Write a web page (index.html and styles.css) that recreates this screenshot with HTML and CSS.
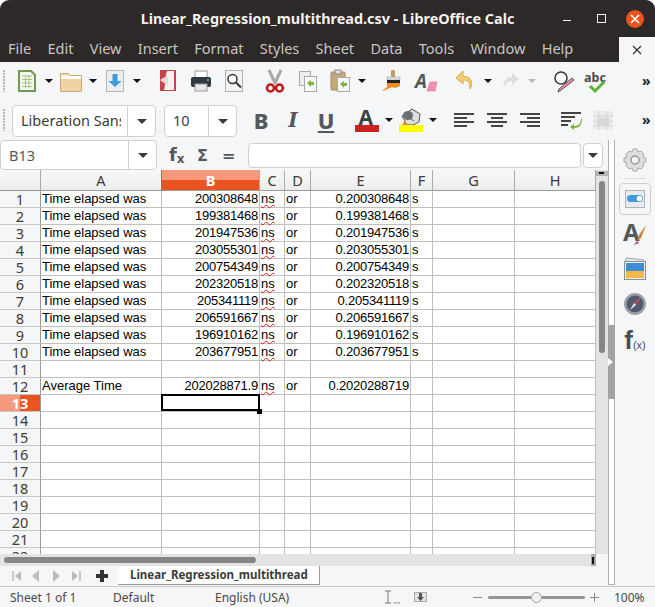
FILE: index.html
```html
<!DOCTYPE html>
<html>

<head>
    <meta charset="utf-8">
    <title>Linear_Regression_multithread.csv - LibreOffice Calc</title>
    <link rel="stylesheet" href="styles.css">
</head>

<body>
    <div class="window">
        <div class="titlebar">
            <span class="title">Linear_Regression_multithread.csv - LibreOffice Calc</span>
            <div class="winbtns">
                <span class="win-min"></span>
                <span class="win-max"></span>
                <span class="win-close">
                    <svg width="12" height="12" viewBox="0 0 12 12"><path d="M2 2l8 8M10 2l-8 8" stroke="#fff" stroke-width="1.6"/></svg>
                </span>
            </div>
        </div>

        <div class="menubar">
            <nav class="menus">
                <span>File</span><span>Edit</span><span>View</span><span>Insert</span><span>Format</span><span>Styles</span><span>Sheet</span><span>Data</span><span>Tools</span><span>Window</span><span>Help</span>
            </nav>
            <div class="doc-close">
                <svg width="10" height="10" viewBox="0 0 10 10"><path d="M1 1l8 8M9 1l-8 8" stroke="#333" stroke-width="1.2"/></svg>
            </div>
        </div>

        <!-- standard toolbar -->
        <div class="toolbar tb-std">
            <span class="grip"></span>
            <svg class="tool ml10" viewBox="0 0 24 24"><path d="M4 2h12l4 4v16H4z" fill="#f4f8ef" stroke="#6f9a4f" stroke-width="2"/><path d="M7 7h10M7 10.500h10M7 14h10M7 17.500h10M10.500 6v13M14 6v13" stroke="#a3c389"/></svg>
            <span class="arrow ml6"></span>
            <svg class="tool ml6" viewBox="0 0 24 24"><path d="M1.500 4.500h8l2 2h11v16h-21z" fill="#f3ddb6" stroke="#c7a878"/><path d="M2 7h20v3H2z" fill="#fff"/><path d="M2 10h20v12H2z" fill="#f0d3a2"/></svg>
            <span class="arrow ml6"></span>
            <svg class="tool ml6" viewBox="0 0 24 24"><rect x="3.500" y="1.500" width="17" height="21" fill="#eceef0" stroke="#b4b7ba"/><path d="M9.500 5h5v7h4l-6.500 6-6.500-6h4z" fill="#3d9bdc"/></svg>
            <span class="arrow ml6"></span>
            <svg class="tool ml15" viewBox="0 0 24 24"><rect x="4" y="1" width="16" height="21" fill="#c4444c"/><path d="M8 21c2-7 1-14 3-19h7v19z" fill="#f6f2f0"/><path d="M4 11l8-5v11z" fill="#f0d8d8"/></svg>
            <svg class="tool ml9" viewBox="0 0 24 24"><rect x="6" y="2" width="12" height="7" fill="#fff" stroke="#999"/><rect x="2" y="8" width="20" height="10" rx="2" fill="#33373a"/><rect x="6" y="15" width="12" height="7" fill="#e8e8e8" stroke="#999"/><rect x="18" y="10" width="2" height="2" fill="#2fa6e8"/></svg>
            <svg class="tool ml9" viewBox="0 0 24 24"><rect x="3.500" y="1.500" width="17" height="21" fill="#f2f3f4" stroke="#b0b2b4"/><circle cx="10.500" cy="10" r="4.500" fill="#fff" stroke="#333" stroke-width="1.500"/><path d="M14 13.500l5 5" stroke="#333" stroke-width="2"/></svg>
            <svg class="tool ml17" viewBox="0 0 24 24"><path d="M6 1l6.500 14M18 1l-6.500 14" stroke="#a8a8a8" stroke-width="3"/><circle cx="7.500" cy="19" r="3.500" fill="none" stroke="#c4161c" stroke-width="2.500"/><circle cx="16.500" cy="19" r="3.500" fill="none" stroke="#c4161c" stroke-width="2.500"/></svg>
            <svg class="tool ml9" viewBox="0 0 24 24"><rect x="3.500" y="2.500" width="11" height="14" fill="#eee" stroke="#aaa"/><rect x="8.500" y="7.500" width="12" height="15" fill="#f8f8f8" stroke="#aaa"/><path d="M11 14l4-3v2h3v3h-3v2z" fill="#7cb342"/></svg>
            <svg class="tool ml8" viewBox="0 0 24 24"><rect x="3" y="3" width="14" height="18" rx="1" fill="#c9a877" stroke="#a88a5c"/><rect x="7" y="1" width="6" height="4" fill="#ddd" stroke="#888"/><rect x="9.500" y="8.500" width="12" height="14" fill="#f6f6f6" stroke="#aaa"/><path d="M12 15l4-3v2h3v3h-3v2z" fill="#7cb342"/></svg>
            <span class="arrow ml6"></span>
            <svg class="tool ml15" viewBox="0 0 24 24"><rect x="10" y="1" width="4" height="7" rx="1" fill="#c89a5c"/><rect x="6" y="8" width="13" height="3" fill="#ddd" stroke="#999" stroke-width=".5"/><path d="M6 11h13v6H6z" fill="#222"/><path d="M6 14h13v3l-5 2-3-1-9 4H1l5-4z" fill="#f08a1c"/></svg>
            <svg class="tool ml9" viewBox="0 0 24 24"><text x="1" y="19" class="ico-a ital">A</text><path d="M13 22l3-9h7l-2 9z" fill="#f490b4" stroke="#e070a0" stroke-width=".6"/></svg>
            <svg class="tool ml15" viewBox="0 0 24 24"><path d="M10 2L3 9l7 6v-4c5 0 7 2 7 9 3-5 3-12-7-13z" fill="#f6cd74" stroke="#e2ac48"/></svg>
            <span class="arrow ml7"></span>
            <svg class="tool ml6" viewBox="0 0 24 24"><path d="M14 4l7 6-7 6v-4c-5 0-7 2-8 7-1-7 2-11 8-11z" fill="#dcdedf"/></svg>
            <span class="arrow off ml6"></span>
            <svg class="tool ml16" viewBox="0 0 24 24"><circle cx="9" cy="9" r="6" fill="#fff" stroke="#333" stroke-width="1.500"/><path d="M22 11L8 22l-2 1 1-3 13-11z" fill="#f08cb0" stroke="#333" stroke-width=".8"/></svg>
            <svg class="tool ml8" viewBox="0 0 24 24"><text x="0" y="13" class="ico-abc">abc</text><path d="M6 17l5 5 9-9" fill="none" stroke="#5ab52c" stroke-width="3"/></svg>
            <span class="more ml-more1">»</span>
        </div>

        <!-- formatting toolbar -->
        <div class="toolbar tb-fmt">
            <span class="grip"></span>
            <div class="combo combo-font ml7"><span class="combo-val">Liberation Sans</span><span class="combo-btn"><i class="arrow big"></i></span></div>
            <div class="combo combo-size ml8"><span class="combo-val">10</span><span class="combo-btn"><i class="arrow big"></i></span></div>
            <span class="fmt-letter fmt-b ml12">B</span>
            <span class="fmt-letter fmt-i ml8">I</span>
            <span class="fmt-letter fmt-u ml9">U</span>
            <svg class="tool ml17" viewBox="0 0 24 24"><text x="3.500" y="16.500" class="ico-fcol">A</text><rect y="17" width="24" height="7" fill="#c9211e"/></svg>
            <span class="arrow ml6"></span>
            <svg class="tool ml6" viewBox="0 0 24 24"><path d="M3 8l10-7 8 5-1 8-6 3H8z" fill="#dcdedf" stroke="#55585a"/><ellipse cx="9" cy="7.500" rx="5" ry="4.500" fill="#6b6e70"/><path d="M11 10l4 3" stroke="#55585a"/><path d="M6 12l2 5H3z" fill="#f08a1c"/><rect y="17" width="24" height="7" fill="#ffff00"/></svg>
            <span class="arrow ml6"></span>
            <svg class="tool ml15" viewBox="0 0 24 24"><path d="M2 6h20M2 10h13M2 14h20M2 18h13" stroke="#444" stroke-width="2"/></svg>
            <svg class="tool ml9" viewBox="0 0 24 24"><path d="M2 6h20M6 10h12M2 14h20M6 18h12" stroke="#444" stroke-width="2"/></svg>
            <svg class="tool ml9" viewBox="0 0 24 24"><path d="M2 6h20M9 10h13M2 14h20M9 18h13" stroke="#444" stroke-width="2"/></svg>
            <svg class="tool ml17" viewBox="0 0 24 24"><path d="M2 5h20M2 9h14M2 13h10M2 17h7" stroke="#444" stroke-width="2"/><path d="M22 11c0 5-3 7-7 7v-2l-4 3 4 3v-2c5 0 8-3 8-9z" fill="#7cb342"/></svg>
            <svg class="tool ml8" viewBox="0 0 24 24"><path d="M2 3h20v19H2z" fill="#eceded"/><path d="M2 8h20M2 13h20M2 18h20M8 3v19M16 3v19" stroke="#d2d3d3"/><rect x="6" y="10" width="12" height="7" fill="#d6d7d7"/></svg>
            <span class="more ml-more2">»</span>
        </div>

        <div class="mainrow">
            <div class="leftcol">
                <!-- formula bar -->
                <div class="formulabar">
                    <div class="combo combo-name"><span class="combo-val">B13</span><span class="combo-btn"><i class="arrow big"></i></span></div>
                    <span class="fx">f<sub>x</sub></span>
                    <span class="sigma">Σ</span>
                    <span class="equals">=</span>
                    <div class="formula-input"></div>
                    <div class="formula-drop"><i class="arrow big"></i></div>
                </div>

                <div class="gridrow">
                    <div class="gridwrap">
                        <table class="grid">
                            <colgroup>
                                <col class="c-head"><col class="c-a"><col class="c-b"><col class="c-c"><col class="c-d"><col class="c-e"><col class="c-f"><col class="c-g"><col class="c-h">
                            </colgroup>
                            <thead>
                                <tr><th></th><th>A</th><th class="sel">B</th><th>C</th><th>D</th><th>E</th><th>F</th><th>G</th><th>H</th></tr>
                            </thead>
                            <tbody>
                                <tr><th>1</th><td>Time elapsed was</td><td class="num">200308648</td><td><u>ns</u></td><td>or</td><td class="num">0.200308648</td><td>s</td><td></td><td></td></tr>
                                <tr><th>2</th><td>Time elapsed was</td><td class="num">199381468</td><td><u>ns</u></td><td>or</td><td class="num">0.199381468</td><td>s</td><td></td><td></td></tr>
                                <tr><th>3</th><td>Time elapsed was</td><td class="num">201947536</td><td><u>ns</u></td><td>or</td><td class="num">0.201947536</td><td>s</td><td></td><td></td></tr>
                                <tr><th>4</th><td>Time elapsed was</td><td class="num">203055301</td><td><u>ns</u></td><td>or</td><td class="num">0.203055301</td><td>s</td><td></td><td></td></tr>
                                <tr><th>5</th><td>Time elapsed was</td><td class="num">200754349</td><td><u>ns</u></td><td>or</td><td class="num">0.200754349</td><td>s</td><td></td><td></td></tr>
                                <tr><th>6</th><td>Time elapsed was</td><td class="num">202320518</td><td><u>ns</u></td><td>or</td><td class="num">0.202320518</td><td>s</td><td></td><td></td></tr>
                                <tr><th>7</th><td>Time elapsed was</td><td class="num">205341119</td><td><u>ns</u></td><td>or</td><td class="num">0.205341119</td><td>s</td><td></td><td></td></tr>
                                <tr><th>8</th><td>Time elapsed was</td><td class="num">206591667</td><td><u>ns</u></td><td>or</td><td class="num">0.206591667</td><td>s</td><td></td><td></td></tr>
                                <tr><th>9</th><td>Time elapsed was</td><td class="num">196910162</td><td><u>ns</u></td><td>or</td><td class="num">0.196910162</td><td>s</td><td></td><td></td></tr>
                                <tr><th>10</th><td>Time elapsed was</td><td class="num">203677951</td><td><u>ns</u></td><td>or</td><td class="num">0.203677951</td><td>s</td><td></td><td></td></tr>
                                <tr><th>11</th><td></td><td></td><td></td><td></td><td></td><td></td><td></td><td></td></tr>
                                <tr><th>12</th><td>Average Time</td><td class="num">202028871.9</td><td><u>ns</u></td><td>or</td><td class="num">0.2020288719</td><td></td><td></td><td></td></tr>
                                <tr><th class="sel">13</th><td></td><td class="cursor"><span class="frame"></span><span class="handle"></span></td><td></td><td></td><td></td><td></td><td></td><td></td></tr>
                                <tr><th>14</th><td></td><td></td><td></td><td></td><td></td><td></td><td></td><td></td></tr>
                                <tr><th>15</th><td></td><td></td><td></td><td></td><td></td><td></td><td></td><td></td></tr>
                                <tr><th>16</th><td></td><td></td><td></td><td></td><td></td><td></td><td></td><td></td></tr>
                                <tr><th>17</th><td></td><td></td><td></td><td></td><td></td><td></td><td></td><td></td></tr>
                                <tr><th>18</th><td></td><td></td><td></td><td></td><td></td><td></td><td></td><td></td></tr>
                                <tr><th>19</th><td></td><td></td><td></td><td></td><td></td><td></td><td></td><td></td></tr>
                                <tr><th>20</th><td></td><td></td><td></td><td></td><td></td><td></td><td></td><td></td></tr>
                                <tr><th>21</th><td></td><td></td><td></td><td></td><td></td><td></td><td></td><td></td></tr>
                                <tr><th>22</th><td></td><td></td><td></td><td></td><td></td><td></td><td></td><td></td></tr>
                            </tbody>
                        </table>
                    </div>
                    <div class="vscroll"><span class="vscroll-top"></span><span class="vscroll-thumb"></span></div>
                </div>
                <div class="hscrollrow">
                    <div class="hscroll"><span class="hscroll-thumb"></span><span class="hscroll-end"></span></div>
                </div>
                <div class="tabbar">
                    <div class="tabnav">
                        <svg width="10" height="12" viewBox="0 0 10 12"><path d="M1 1v10" stroke="#bbb" stroke-width="1.500"/><path d="M9 1v10L3 6z" fill="#bbb"/></svg>
                        <svg class="ml10" width="8" height="12" viewBox="0 0 8 12"><path d="M7 0v12L0 6z" fill="#bbb"/></svg>
                        <svg class="ml12" width="8" height="12" viewBox="0 0 8 12"><path d="M1 0v12l7-6z" fill="#bbb"/></svg>
                        <svg class="ml11" width="10" height="12" viewBox="0 0 10 12"><path d="M1 1v10l6-5z" fill="#bbb"/><path d="M9 1v10" stroke="#bbb" stroke-width="1.500"/></svg>
                        <svg class="ml15" width="12" height="12" viewBox="0 0 12 12"><path d="M4 0h4v4h4v4H8v4H4V8H0V4h4z" fill="#333"/></svg>
                    </div>
                    <div class="tab">Linear_Regression_multithread</div>
                </div>
            </div>

            <!-- sidebar -->
            <div class="sidehandle"><span class="sidehandle-grip"><i></i></span></div>
            <aside class="sidebar">
                <svg class="side-ico side-gear" viewBox="0 0 24 24"><path d="M10 1h4l1 3 3-1 3 3-1 3 3 1v4l-3 1 1 3-3 3-3-1-1 3h-4l-1-3-3 1-3-3 1-3-3-1v-4l3-1-1-3 3-3 3 1z" fill="#dcdddd" stroke="#aaa"/><circle cx="12" cy="12" r="4" fill="#f4f5f6" stroke="#999" stroke-width="1.500"/></svg>
                <span class="side-sep"></span>
                <span class="side-active">
                    <svg class="side-ico" viewBox="0 0 24 24"><rect x="2.500" y="3.500" width="19" height="17" fill="#e8ebee" stroke="#b0b4b8"/><rect x="4" y="8" width="16" height="7" rx="3.500" fill="#3d9bdc"/><circle cx="16.500" cy="11.500" r="2.800" fill="#fff"/></svg>
                </span>
                <svg class="side-ico" viewBox="0 0 24 24"><text x="0" y="19" class="ico-a big">A</text><path d="M23 3l-7 10-2 6 4-3z" fill="#c9822c"/><path d="M14 19l-3 4 5-2z" fill="#b03a9a"/></svg>
                <svg class="side-ico" viewBox="0 0 24 24"><path d="M3 1l18 2-1 4H3z" fill="#dfe6ee" stroke="#a0a8b0"/><rect x="1.500" y="4.500" width="21" height="18" fill="#eef0f2" stroke="#8a9098"/><rect x="3" y="6" width="18" height="8" fill="#3b8fd4"/><rect x="3" y="14" width="18" height="7" fill="#f2b84c"/></svg>
                <svg class="side-ico" viewBox="0 0 24 24"><circle cx="12" cy="12" r="11" fill="#9da0a4"/><circle cx="12" cy="12" r="8.500" fill="#525a70"/><path d="M17 6l-4 7-6 5 4-7z" fill="#e8e8ea"/><path d="M17 6l-6 5 2 2z" fill="#d03030"/></svg>
                <span class="side-fx">f<small>(x)</small></span>
            </aside>
        </div>

        <div class="statusbar">
            <span class="st-sheet">Sheet 1 of 1</span>
            <span class="st-style">Default</span>
            <span class="st-lang">English (USA)</span>
            <svg class="st-ins" width="16" height="14" viewBox="0 0 16 14"><path d="M1 1h6M1 13h6M4 1v12" stroke="#777"/><path d="M10 12v1h6v-1" fill="none" stroke="#999"/></svg>
            <svg class="st-save" width="13" height="10" viewBox="0 0 13 10"><rect x=".5" y=".5" width="12" height="9" fill="#e2e3e3" stroke="#aaa"/><path d="M5 1h3v4h2L6.500 9 3 5h2z" fill="#555"/></svg>
            <div class="zoomctl">
                <span class="zoom-minus"></span>
                <div class="zoom-track"><span class="zoom-knob"></span></div>
                <span class="zoom-plus"></span>
            </div>
            <span class="st-zoom">100%</span>
        </div>
    </div>
</body>

</html>
```

FILE: styles.css
```css
html,
body {
    height: 100%;
    margin: 0;
    overflow: hidden;
    background: #fff;
}

.window {
    width: 655px;
    height: 607px;
    display: flex;
    flex-direction: column;
    font-family: "Noto Sans", sans-serif;
    color: #3c3b37;
    overflow: hidden;
    border-radius: 9px 9px 0 0;
    background: #f5f6f7;
}

/* margins shared by toolbar items */
.ml6 { margin-left: 6px; }
.ml7 { margin-left: 7px; }
.ml8 { margin-left: 8px; }
.ml9 { margin-left: 9px; }
.ml10 { margin-left: 10px; }
.ml11 { margin-left: 11px; }
.ml12 { margin-left: 12px; }
.ml15 { margin-left: 15px; }
.ml16 { margin-left: 16px; }
.ml17 { margin-left: 17px; }

/* title bar */
.titlebar {
    height: 37px;
    flex: none;
    position: relative;
    background: #2c2928;
    display: flex;
    align-items: center;
    justify-content: center;
}

.title {
    font-size: 14.4px;
    font-weight: 700;
    color: #f4f2f0;
}

.winbtns {
    position: absolute;
    top: 0;
    right: 0;
    height: 37px;
    display: flex;
    align-items: center;
}

.win-min {
    width: 8px;
    height: 1px;
    margin-top: 4px;
    background: #f4f2f0;
}

.win-max {
    width: 7px;
    height: 7px;
    margin-left: 26px;
    border: 1px solid #f4f2f0;
}

.win-close {
    width: 18px;
    height: 18px;
    margin: 0 11px 0 20px;
    border-radius: 50%;
    background: #e95420;
    display: flex;
    align-items: center;
    justify-content: center;
}

/* menu bar */
.menubar {
    height: 25px;
    flex: none;
    display: flex;
    background: #2c2928;
}

.menus {
    flex: 1;
    display: flex;
    align-items: center;
    padding: 0 0 3px 8px;
    gap: 16.3px;
    font-size: 14.5px;
    color: #c9c6c1;
}

.doc-close {
    width: 36px;
    background: #f5f6f7;
    display: flex;
    align-items: center;
    justify-content: center;
}

/* toolbars */
.toolbar {
    flex: none;
    display: flex;
    align-items: center;
    padding-left: 3px;
}

.tb-std {
    height: 38px;
}

.tb-fmt {
    height: 40px;
}

.grip {
    width: 2px;
    height: 22px;
    background: repeating-linear-gradient(#b6b8b8 0 2px, transparent 2px 3px);
}

.tool {
    width: 24px;
    height: 24px;
    flex: none;
    overflow: visible;
}

.arrow {
    display: inline-block;
    flex: none;
    width: 0;
    height: 0;
    border-left: 4px solid transparent;
    border-right: 4px solid transparent;
    border-top: 4px solid #111;
}

.arrow.off {
    border-top-color: #b8b9ba;
}

.arrow.big {
    border-left-width: 5px;
    border-right-width: 5px;
    border-top-width: 5px;
    border-top-color: #3c3b37;
}

.more {
    font-size: 14px;
    font-weight: 700;
    color: #222;
    line-height: 1;
}

.ml-more1 {
    margin-left: 34px;
}

.ml-more2 {
    margin-left: 27px;
}

.ico-a {
    font: 700 19px "Noto Sans", sans-serif;
    fill: #55585a;
}

.ico-a.ital {
    font-style: italic;
}

.ico-a.big {
    font-size: 24px;
}

.ico-abc {
    font: 700 12.5px "Noto Sans", sans-serif;
    fill: #4a4d4f;
}

.ico-fcol {
    font: 700 21px "Noto Sans", sans-serif;
    fill: #3e4144;
}

.combo {
    flex: none;
    height: 32px;
    box-sizing: border-box;
    display: flex;
    align-items: stretch;
    background: #fff;
    border: 1px solid #cdd0d2;
    border-radius: 4px;
    font-size: 14.5px;
}

.tb-fmt .combo {
    margin-top: 2px;
}

.tb-fmt .combo-val {
    padding-bottom: 2px;
}

.combo-val {
    flex: 1;
    min-width: 0;
    overflow: hidden;
    white-space: nowrap;
    display: flex;
    align-items: center;
    margin-left: 8px;
}

.combo-font .combo-val {
    margin-right: 6px;
}

.combo-btn {
    flex: none;
    width: 27px;
    border-left: 1px solid #cdd0d2;
    display: flex;
    align-items: center;
    justify-content: center;
}

.combo-font {
    width: 144px;
}

.combo-size {
    width: 73px;
}

.fmt-letter {
    width: 24px;
    flex: none;
    text-align: center;
    font-size: 22px;
    font-weight: 800;
    color: #55585a;
    line-height: 24px;
}

.fmt-i {
    font: italic 700 20px/24px "DejaVu Serif", serif;
}

.fmt-u {
    text-decoration: underline;
    text-decoration-thickness: 2px;
    text-underline-offset: 2px;
}

/* main area: formula bar and sheet on the left, deck on the right */
.mainrow {
    flex: 1;
    min-height: 0;
    display: flex;
}

.leftcol {
    width: 608px;
    flex: none;
    display: flex;
    flex-direction: column;
}

.formulabar {
    height: 30px;
    flex: none;
    display: flex;
    align-items: center;
    color: #55585a;
}

.combo-name {
    width: 157px;
    height: 30px;
}

.fx {
    margin-left: 12px;
    width: 17px;
    font: 700 18px "DejaVu Sans", sans-serif;
}

.fx sub {
    font: 700 12px "DejaVu Sans", sans-serif;
    vertical-align: -2px;
}

.sigma {
    margin-left: 11px;
    width: 11px;
    font: 700 16px "DejaVu Sans", sans-serif;
}

.equals {
    margin-left: 14px;
    width: 12px;
    font: 700 16px "DejaVu Sans", sans-serif;
}

.formula-input {
    flex: none;
    width: 333px;
    height: 25px;
    box-sizing: border-box;
    margin-left: 14px;
    background: #fff;
    border: 1px solid #cdd0d2;
    border-radius: 4px;
}

.formula-drop {
    flex: none;
    width: 20px;
    height: 25px;
    box-sizing: border-box;
    margin-left: 2px;
    display: flex;
    align-items: center;
    justify-content: center;
    background: #fff;
    border: 1px solid #cdd0d2;
    border-radius: 4px;
}

/* sheet */
.gridrow {
    height: 384px;
    flex: none;
    display: flex;
}

.gridwrap {
    width: 596px;
    flex: none;
    overflow: hidden;
    background: #fff;
}

.grid {
    table-layout: fixed;
    width: 596px;
    border-collapse: separate;
    border-spacing: 0;
    font: 13px "Liberation Sans", Arial, sans-serif;
    color: #000;
}

.c-head { width: 41px; }
.c-a { width: 121px; }
.c-b { width: 98px; }
.c-c { width: 25px; }
.c-d { width: 26px; }
.c-e { width: 100px; }
.c-f { width: 22px; }
.c-g { width: 82px; }
.c-h { width: 81px; }

.grid th {
    padding: 0;
    box-sizing: border-box;
    font: 400 14.5px "Noto Sans", sans-serif;
    color: #3c3b37;
    text-align: center;
}

.grid thead th {
    height: 21px;
    line-height: 20px;
    background: linear-gradient(#f7f8f8, #eceded);
    border-right: 1px solid #a9aaaa;
    border-bottom: 1px solid #9a9b9b;
}

.grid thead th.sel {
    background: linear-gradient(#f49a7a 50%, #e95420 50%);
    box-shadow: -1px 0 0 #e95420;
    color: #fff;
    font-weight: 700;
}

.grid tbody th {
    height: 17px;
    line-height: 16px;
    background: #f5f6f7;
    border-right: 1px solid #9a9b9b;
    border-bottom: 1px solid #c6c7c7;
}

.grid tbody th.sel {
    background: linear-gradient(90deg, #f49a7a 50%, #e95420 50%);
    color: #fff;
    font-weight: 700;
}

.grid td {
    height: 17px;
    box-sizing: border-box;
    padding: 0 0 0 1px;
    border-right: 1px solid #c0c0c0;
    border-bottom: 1px solid #c0c0c0;
    white-space: nowrap;
    line-height: 16px;
}

.grid td.num {
    text-align: right;
    padding-right: 1px;
    letter-spacing: -0.23px;
}

.grid u {
    text-decoration: underline wavy #d0201c;
    text-decoration-thickness: 1px;
    text-underline-offset: 1px;
}

.grid td.cursor {
    position: relative;
}

.frame {
    position: absolute;
    top: -1px;
    left: -1px;
    right: -1px;
    bottom: 0;
    border: 2px solid #000;
}

.handle {
    position: absolute;
    right: -3px;
    bottom: -3px;
    width: 5px;
    height: 5px;
    background: #000;
}

/* scrollbars */
.vscroll {
    width: 12px;
    flex: none;
    position: relative;
    background: #e2e3e2;
}

.vscroll-top {
    position: absolute;
    top: 1px;
    left: 0;
    width: 12px;
    height: 5px;
    background: linear-gradient(#111, #111) 3px 1px / 5px 2px no-repeat, #b4b6b5;
}

.vscroll-thumb {
    position: absolute;
    top: 11px;
    left: 3px;
    width: 6px;
    height: 172px;
    border-radius: 3px;
    background: #858786;
}

.hscrollrow {
    height: 12px;
    flex: none;
}

.hscroll {
    width: 596px;
    height: 12px;
    position: relative;
    background: #e2e3e2;
}

.hscroll-thumb {
    position: absolute;
    top: 3px;
    left: 4px;
    width: 252px;
    height: 6px;
    border-radius: 3px;
    background: #858786;
}

.hscroll-end {
    position: absolute;
    right: 0;
    top: 0;
    width: 5px;
    height: 12px;
    background: linear-gradient(#111, #111) 1px 3px / 2px 7px no-repeat, #a9abaa;
}

.tabbar {
    flex: 1;
    display: flex;
    min-height: 0;
}

.tabnav {
    width: 118px;
    flex: none;
    display: flex;
    align-items: center;
    padding-left: 12px;
    box-sizing: border-box;
    height: 20px;
}

.tab {
    height: 19px;
    box-sizing: border-box;
    padding: 0 11px 0 12px;
    background: #fff;
    border-right: 1px solid #9a9b9b;
    border-bottom: 1px solid #9a9b9b;
    font-size: 11.5px;
    font-weight: 700;
    line-height: 17px;
    white-space: nowrap;
}

/* sidebar */
.sidehandle {
    width: 7px;
    flex: none;
    box-sizing: border-box;
    background: #fff;
    border-left: 1px solid #b0b2b2;
    border-right: 1px solid #b0b2b2;
    border-bottom: 1px solid #b0b2b2;
    margin-bottom: 1px;
    display: flex;
    align-items: flex-start;
}

.sidehandle-grip {
    width: 7px;
    height: 74px;
    margin: 185px 0 0 -1px;
    flex: none;
    background: #a1a3a2;
    display: flex;
    align-items: center;
}

.sidehandle-grip i {
    border-left: 5px solid #fff;
    border-top: 4px solid transparent;
    border-bottom: 4px solid transparent;
}

.sidebar {
    flex: 1;
    display: flex;
    flex-direction: column;
    align-items: center;
    padding-top: 8px;
}

.side-ico {
    width: 24px;
    height: 24px;
    flex: none;
    margin-bottom: 11px;
}

.side-gear {
    margin-bottom: 6px;
}

.side-sep {
    width: 22px;
    height: 1px;
    background: #dcdddd;
    margin-bottom: 4px;
}

.side-active {
    width: 30px;
    height: 30px;
    border: 1px solid #cdd0d2;
    border-radius: 4px;
    display: flex;
    align-items: center;
    justify-content: center;
    margin-bottom: 7px;
}

.side-active .side-ico {
    margin: 0;
}

.side-fx {
    margin-top: 1px;
    font: 700 26px "Liberation Sans", sans-serif;
    color: #4a4d4f;
    line-height: 24px;
}

.side-fx small {
    font: 400 11px "Liberation Sans", sans-serif;
}

/* status bar */
.statusbar {
    height: 20px;
    flex: none;
    display: flex;
    align-items: center;
    border-top: 1px solid #c6c7c7;
    font-size: 12px;
    color: #4a4a46;
}

.st-sheet {
    margin-left: 10px;
    width: 103px;
}

.st-style {
    width: 102px;
}

.st-lang {
    width: 165px;
}

.st-ins {
    margin-left: 4px;
}

.st-save {
    margin-left: 14px;
}

.zoomctl {
    margin-left: 46px;
    display: flex;
    align-items: center;
}

.zoom-minus {
    width: 9px;
    height: 1px;
    background: #888;
}

.zoom-track {
    position: relative;
    width: 97px;
    height: 3px;
    margin-left: 6px;
    border-radius: 2px;
    background: #949594;
}

.zoom-knob {
    position: absolute;
    top: -4px;
    left: 43px;
    width: 9px;
    height: 9px;
    border: 1px solid #a5a6a6;
    border-radius: 50%;
    background: #f0f0f0;
}

.zoom-plus {
    width: 9px;
    height: 9px;
    margin-left: 5px;
    background: linear-gradient(#888, #888) center / 9px 1px no-repeat, linear-gradient(#888, #888) center / 1px 9px no-repeat;
}

.st-zoom {
    margin-left: 15px;
}
```
